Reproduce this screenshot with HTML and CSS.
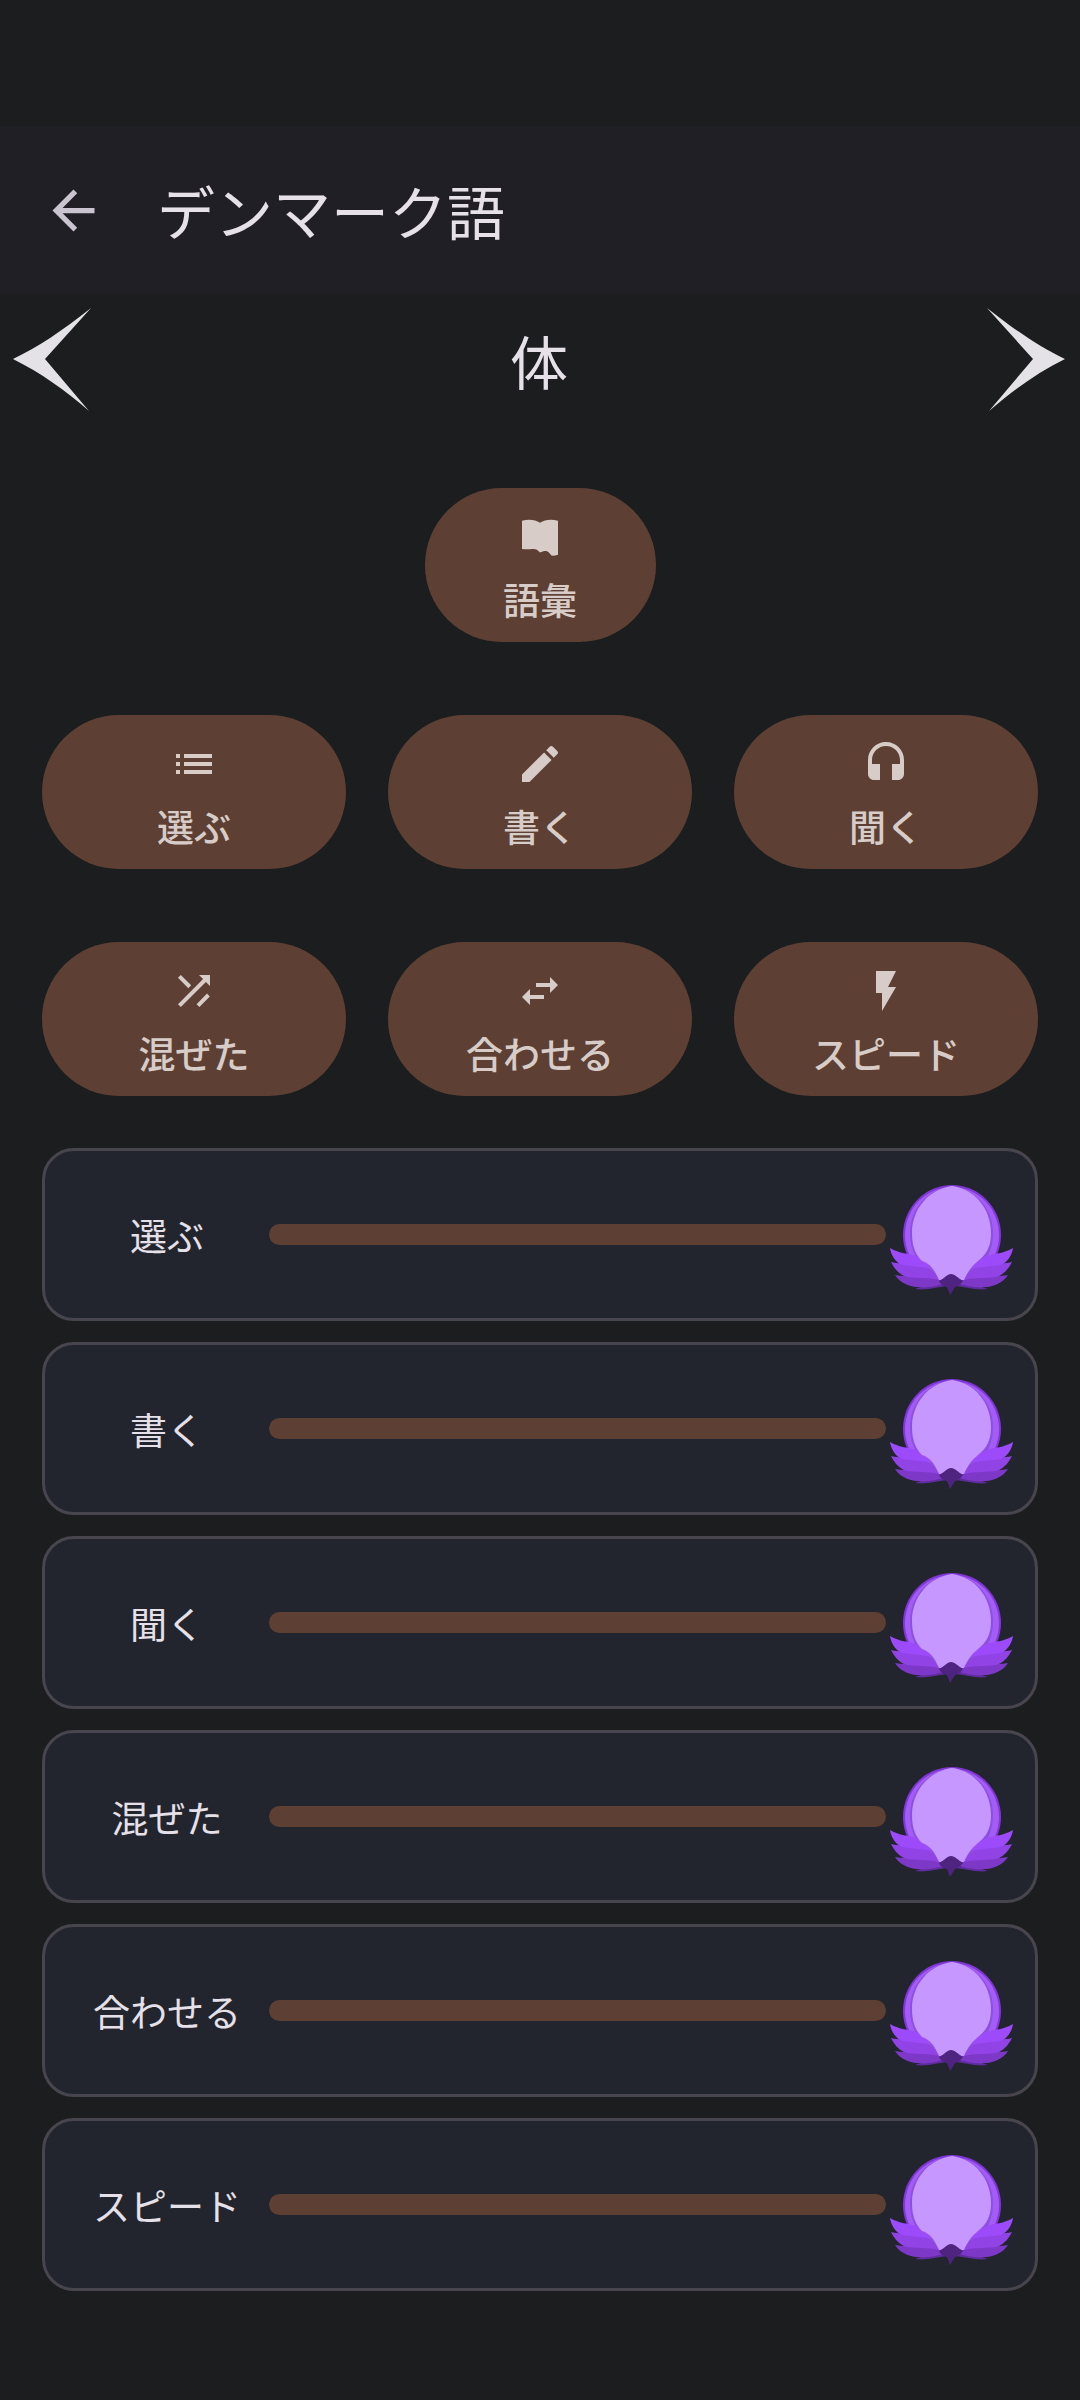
FILE: index.html
```
<!DOCTYPE html>
<html lang="ja">
<head>
    <meta charset="UTF-8">
    <meta name="viewport" content="width=device-width, initial-scale=1.0">
    <title>デンマーク語</title>
    <link rel="stylesheet" href="styles.css">
</head>
<body>
    <!-- Shared lotus badge -->
    <svg class="defs" width="0" height="0" aria-hidden="true">
        <symbol id="lotus-wing" viewBox="0 0 66 120" overflow="visible">
            <path d="M29 114c5-2 12-3 15-7l21-5v9c-12 0-24 5-36 3z" fill="#5f2c9c"/>
            <path d="M9 100c14 3 30-3 44 4l7 4c-10 4-24 6-35 3-7-2-13-6-16-11z" fill="#7d38c8"/>
            <path d="M5 87c16 4 38-2 48 18-12-3-26-1-35-4-6-3-10-8-13-14z" fill="#9143e6"/>
            <path d="M4 73c10 6 18 5 26 8 9 3 14 7 16 13-10-3-24-2-32-5C9 86 5 80 4 73z" fill="#9d4bfa"/>
        </symbol>
        <symbol id="lotus" viewBox="0 0 133 120">
            <ellipse cx="66" cy="60" rx="49" ry="50" fill="#8136d6"/>
            <ellipse cx="66" cy="60" rx="47" ry="48" fill="#a45cf8"/>
            <path d="M66 11C42 14 24 33 24 58c0 21 10 34 28 47h28c17-13 27-26 27-47 0-25-18-44-41-47z" fill="#8d50dc"/>
            <use href="#lotus-wing" width="66" height="120"/>
            <use href="#lotus-wing" width="66" height="120" transform="translate(131 0) scale(-1 1)"/>
            <path d="M66 11C43 14 26 34 26 58c0 14 4 22 10 28 9 3 13 10 17 19h25c4-9 8-14 14-19 9-7 13-15 13-28 0-24-16-44-39-47z" fill="#c597ff"/>
            <path d="M53 106c6-3 8-7 12-7s7 4 12 7c-2 3-5 5-8 6l-5 8-3-8c-4-1-7-3-8-6z" fill="#4f2480"/>
        </symbol>
    </svg>

    <header class="app-bar">
        <button class="back" aria-label="戻る">
            <svg viewBox="0 0 24 24"><path d="M20 11H7.830l5.590-5.590L12 4l-8 8 8 8 1.410-1.410L7.830 13H20v-2z"/></svg>
        </button>
        <h1>デンマーク語</h1>
    </header>

    <main>
        <div class="topic">
            <button class="topic-arrow" aria-label="前へ">
                <svg viewBox="0 0 80 106"><path d="M1 52C26 40 50 24 79 1L33 52l44 52C53 83 29 66 1 52z"/></svg>
            </button>
            <h2>体</h2>
            <button class="topic-arrow" aria-label="次へ">
                <svg viewBox="0 0 80 106"><path d="M79 52C54 40 30 24 1 1l46 51L3 104c24-21 48-38 76-52z"/></svg>
            </button>
        </div>

        <div class="modes">
            <button class="mode mode-small">
                <svg viewBox="0 0 24 24"><path d="M3 3.900c3-.8 6.500-.8 9 1 2.500-1.800 6-1.800 9-1v17c-1.200.4-2.200.5-3.300.4-1.200-1.800-2-2.700-4-2.200L12 19.800l-1.200-1.200c-2.300-1.200-4.500 0-7.800-.6z"/></svg>
                <span>語彙</span>
            </button>
            <button class="mode">
                <svg viewBox="0 0 24 24"><path d="M3 13h2v-2H3v2zm0 4h2v-2H3v2zm0-8h2V7H3v2zm4 4h14v-2H7v2zm0 4h14v-2H7v2zM7 7v2h14V7H7z"/></svg>
                <span>選ぶ</span>
            </button>
            <button class="mode">
                <svg viewBox="0 0 24 24"><path d="M3 17.250V21h3.750L17.810 9.940l-3.750-3.750L3 17.250zM20.710 7.040c.39-.39.39-1.020 0-1.410l-2.340-2.340c-.39-.39-1.020-.39-1.410 0l-1.830 1.830 3.750 3.750 1.830-1.830z"/></svg>
                <span>書く</span>
            </button>
            <button class="mode">
                <svg viewBox="0 0 24 24"><path d="M12 1c-4.970 0-9 4.030-9 9v7c0 1.660 1.340 3 3 3h3v-8H5v-2c0-3.870 3.130-7 7-7s7 3.130 7 7v2h-4v8h3c1.660 0 3-1.340 3-3v-7c0-4.970-4.030-9-9-9z"/></svg>
                <span>聞く</span>
            </button>
            <button class="mode">
                <svg viewBox="0 0 24 24"><path d="M10.590 9.170L5.410 4 4 5.410l5.170 5.170 1.420-1.410zM14.500 4l2.040 2.040L4 18.590 5.410 20 17.960 7.460 20 9.500V4h-5.500zM18.500 13.300l1.400 1.400L14.700 20l-1.400-1.400z"/></svg>
                <span>混ぜた</span>
            </button>
            <button class="mode">
                <svg viewBox="0 0 24 24"><path d="M6.990 11L3 15l3.990 4v-3H14v-2H6.990v-3zM21 9l-3.990-4v3H10v2h7.010v3L21 9z"/></svg>
                <span>合わせる</span>
            </button>
            <button class="mode">
                <svg viewBox="0 0 24 24"><path d="M7 2v11h3v9l7-12h-4l4-8z"/></svg>
                <span>スピード</span>
            </button>
        </div>

        <ul class="scores">
            <li class="score">
                <span class="score-name">選ぶ</span>
                <div class="bar"></div>
                <svg class="badge"><use href="#lotus"/></svg>
            </li>
            <li class="score">
                <span class="score-name">書く</span>
                <div class="bar"></div>
                <svg class="badge"><use href="#lotus"/></svg>
            </li>
            <li class="score">
                <span class="score-name">聞く</span>
                <div class="bar"></div>
                <svg class="badge"><use href="#lotus"/></svg>
            </li>
            <li class="score">
                <span class="score-name">混ぜた</span>
                <div class="bar"></div>
                <svg class="badge"><use href="#lotus"/></svg>
            </li>
            <li class="score">
                <span class="score-name">合わせる</span>
                <div class="bar"></div>
                <svg class="badge"><use href="#lotus"/></svg>
            </li>
            <li class="score">
                <span class="score-name">スピード</span>
                <div class="bar"></div>
                <svg class="badge"><use href="#lotus"/></svg>
            </li>
        </ul>
    </main>
</body>
</html>
```
FILE: styles.css
```
* {
    box-sizing: border-box;
}
body {
    margin: 0;
    padding: 126px 0 108px;
    min-height: 100vh;
    background-color: #1b1d1e;
    color: #e6e0e9;
    font-family: "Noto Sans CJK JP", "Noto Sans", sans-serif;
}
button {
    border: none;
    background: none;
    padding: 0;
    color: inherit;
    font-family: inherit;
    cursor: pointer;
}
svg {
    display: block;
    fill: currentColor;
}
.defs {
    position: absolute;
}
h1, h2 {
    margin: 0;
    font-size: 58px;
    font-weight: 400;
    line-height: 74px;
}

/* Top bar */
.app-bar {
    display: flex;
    align-items: center;
    gap: 52px;
    height: 168px;
    padding: 0 42px;
    background-color: #211f26;
}
.back {
    color: #cac4d0;
}
.back svg {
    width: 63px;
    height: 63px;
}

/* Topic switcher */
.topic {
    display: flex;
    justify-content: space-between;
    align-items: center;
    height: 131px;
    padding: 0 14px 0 12px;
}
.topic-arrow {
    color: #e4e2e7;
}
.topic-arrow svg {
    width: 80px;
    height: 106px;
}

/* Exercise buttons */
.modes {
    display: grid;
    grid-template-columns: repeat(3, 1fr);
    gap: 73px 42px;
    padding: 63px 42px 52px;
}
.mode {
    display: flex;
    flex-direction: column;
    align-items: center;
    gap: 12px;
    height: 154px;
    padding-top: 25px;
    border-radius: 77px;
    background-color: #5d4033;
    color: #d7ccc8;
    font-size: 37px;
    font-weight: 500;
    line-height: 52px;
}
.mode svg {
    width: 48px;
    height: 48px;
}
.mode-small {
    grid-column: 1 / -1;
    justify-self: center;
    width: 231px;
}

/* Progress cards */
.scores {
    display: flex;
    flex-direction: column;
    gap: 21px;
    margin: 0;
    padding: 0 42px;
    list-style: none;
}
.score {
    display: flex;
    align-items: center;
    height: 173px;
    padding: 0 16px 0 20px;
    border: 3px solid #49454f;
    border-radius: 32px;
    background-color: #22252d;
}
.score-name {
    width: 204px;
    text-align: center;
    font-size: 37px;
    line-height: 52px;
}
.bar {
    flex: 1;
    height: 21px;
    border-radius: 11px;
    background-color: #5d4033;
}
.badge {
    width: 133px;
    height: 120px;
}
```
